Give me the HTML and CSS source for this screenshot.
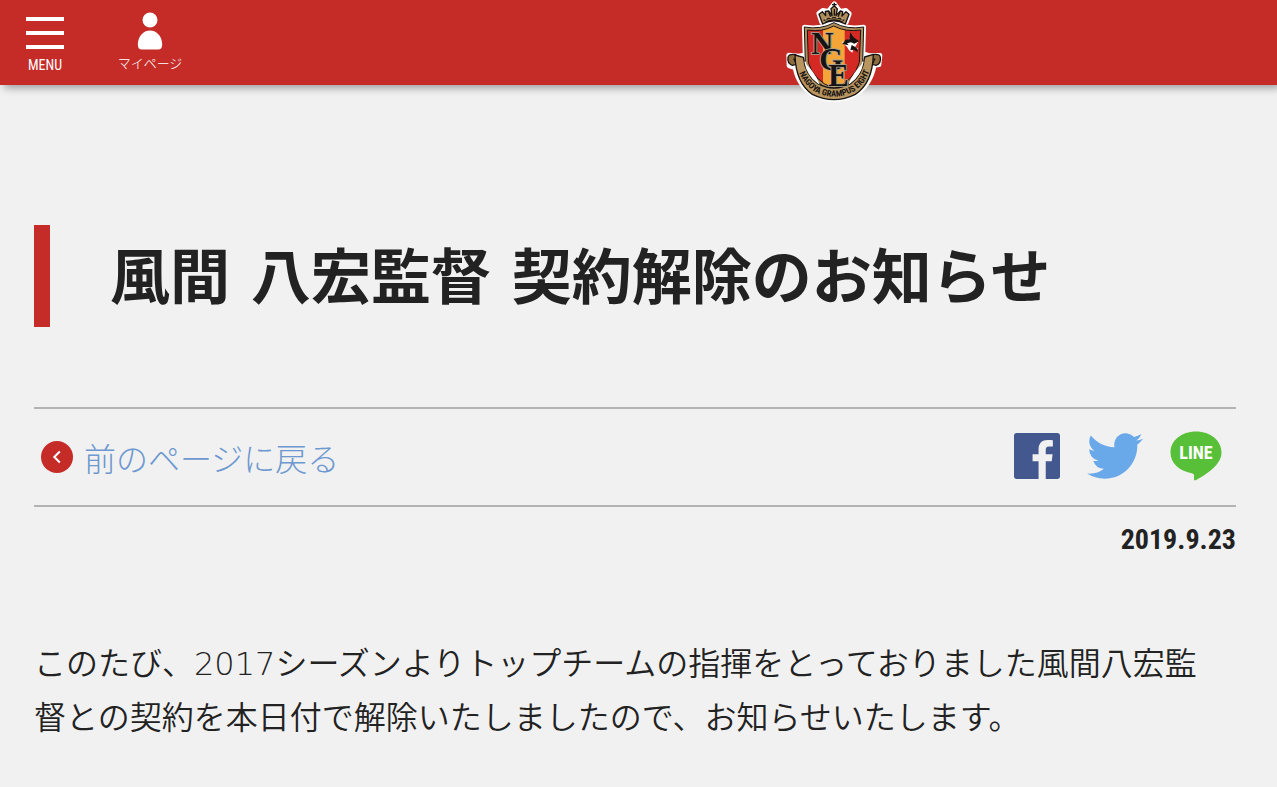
FILE: index.html
```html
<!DOCTYPE html>
<html lang="ja">
<head>
<meta charset="utf-8">
<meta name="viewport" content="width=device-width, initial-scale=1">
<title>風間 八宏監督 契約解除のお知らせ</title>
<link rel="stylesheet" href="styles.css">
</head>
<body>
<header class="site-header">
  <button class="header-item menu" type="button">
    <svg class="menu-icon" viewBox="0 0 38 38" aria-hidden="true"><path d="M0 5h38M0 19h38M0 33h38" stroke="#fff" stroke-width="4"/></svg>
    <span class="menu-label">MENU</span>
  </button>
  <a class="header-item mypage" href="#">
    <svg class="menu-icon" viewBox="0 0 38 38" aria-hidden="true"><g fill="#fff"><circle cx="19" cy="8" r="7.5"/><path d="M11 37.500Q6.500 37.500 6.800 32C7.500 23 13 18.500 19 18.500S30.500 23 31.200 32Q31.500 37.500 27 37.500Z"/></g></svg>
    <span class="mypage-label">マイページ</span>
  </a>
  <a class="crest" href="#" aria-label="NAGOYA GRAMPUS EIGHT">
    <svg class="crest-art" viewBox="0 0 360 330">
      <defs>
        <clipPath id="shield"><path d="M100 90Q144 97 179 78Q216 97 260 90L256 187Q242 241 180 266Q117 241 103 187Z"/></clipPath>
        <path id="ribbon-text" d="M66 186Q79 246 119 273Q180 307 242 273Q284 244 295 180"/>
      </defs>
      <g fill="#fff" stroke="#fff" stroke-width="14" stroke-linejoin="round">
        <path d="M143 67L134 40 146 31 163 34 181 11 198 34 216 31 226 41 217 67Z"/>
        <path d="M91 81Q140 90 180 68Q220 90 269 81L266 187Q248 250 180 276Q110 248 94 187Z"/>
        <path d="M44 165L75 168 90 165Q97 230 130 248Q180 275 231 248Q266 228 273 163L288 167 318 166 315 194 301 196Q288 258 244 283Q180 314 115 283Q73 256 63 203L45 197Z"/>
      </g>
      <path d="M91 81Q140 90 180 68Q220 90 269 81L266 187Q248 250 180 276Q110 248 94 187Z" fill="#b08e5b" stroke="#171312" stroke-width="3"/>
      <g clip-path="url(#shield)">
        <path d="M90 60H270V280H90Z" fill="#d42a23"/>
        <path d="M147 60H212V280H147Z" fill="#f4a537"/>
      </g>
      <path d="M100 90Q144 97 179 78Q216 97 260 90L256 187Q242 241 180 266Q117 241 103 187Z" fill="none" stroke="#171312" stroke-width="3"/>
      <path d="M146 72L135 43 145 35 155 47 154 34 164 33 174 47 171 26 181 17 190 27 186 47 199 33 206 35 204 48 216 35 225 43 214 72Q180 53 146 72Z" fill="#b08e5b" stroke="#171312" stroke-width="4" stroke-linejoin="round"/>
      <path d="M181 8V21M174 14H188M149 61Q180 45 211 61M154 67Q180 53 207 67M164 37L170 50M198 37L192 50M181 27V47" fill="none" stroke="#171312" stroke-width="4"/>
      <path d="M152 57H158M167 53H173M187 53H193M202 57H208" stroke="#f1d9a7" stroke-width="3"/>
      <path d="M65 164Q45 161 42 172Q39 190 55 196L68 193 60 178 72 176ZM297 164Q317 161 319 172Q322 190 306 196L294 193 302 178 290 176Z" fill="#8d6c3d" stroke="#171312" stroke-width="4"/>
      <path d="M63 165L88 172Q94 223 130 250Q180 278 231 250Q267 223 272 171L298 163Q296 250 244 283Q180 315 115 283Q65 249 63 165Z" fill="#b9965f" stroke="#171312" stroke-width="4" stroke-linejoin="round"/>
      <path d="M93 185Q101 228 133 249Q120 220 97 196ZM267 185Q259 228 227 249Q240 220 263 196Z" fill="#fff" stroke="#fff" stroke-width="4"/>
      <text class="ribbon"><textPath href="#ribbon-text" startOffset="50%" text-anchor="middle">NAGOYA GRAMPUS EIGHT</textPath></text>
      <g class="monogram">
        <text x="112" y="163">N</text>
        <text x="136" y="211">G</text>
        <text x="163" y="259">E</text>
      </g>
      <path d="M203 126L220 123 235 105 236 119 252 126 244 140 253 147 238 146 235 158 225 151 219 140Z" fill="#fff"/>
      <path d="M205 132L215 119 226 118 229 97 239 112 255 124 241 131 231 127 219 130 224 136ZM233 135L248 143 252 157 239 149 229 151Z" fill="#171312"/>
    </svg>
  </a>
</header>
<main class="article">
  <h1 class="title">風間 八宏監督 契約解除のお知らせ</h1>
  <div class="toolbar">
    <a class="back" href="#">
      <svg class="back-icon" viewBox="0 0 32 32" aria-hidden="true"><circle cx="16" cy="16" r="16" fill="#c52c28"/><path d="M18.800 10.500L13.300 16L18.800 21.500" fill="none" stroke="#fff" stroke-width="2"/></svg>
      <span>前のページに戻る</span>
    </a>
    <nav class="share" aria-label="シェア">
      <a href="#" aria-label="Facebook"><svg class="facebook" viewBox="0 0 24 24"><path fill="#43588f" d="M22.676 0H1.324C.593 0 0 .593 0 1.324v21.352C0 23.408.593 24 1.324 24h11.494v-9.294H9.689v-3.621h3.129V8.410c0-3.099 1.894-4.785 4.659-4.785 1.325 0 2.464.097 2.796.141v3.240h-1.921c-1.500 0-1.792.721-1.792 1.771v2.311h3.584l-.465 3.630H16.560V24h6.115c.733 0 1.325-.592 1.325-1.324V1.324C24 .593 23.408 0 22.676 0"/></svg></a>
      <a href="#" aria-label="Twitter"><svg class="twitter" viewBox="0 2.200 24 19.600"><path fill="#6aa9e9" d="M23.954 4.569a10 10 0 0 1-2.825.775 4.958 4.958 0 0 0 2.163-2.723c-.951.555-2.005.959-3.127 1.184a4.920 4.920 0 0 0-8.384 4.482C7.691 8.094 4.066 6.130 1.640 3.161a4.822 4.822 0 0 0-.666 2.475c0 1.710.870 3.213 2.188 4.096a4.904 4.904 0 0 1-2.228-.616v.061a4.923 4.923 0 0 0 3.946 4.827 4.996 4.996 0 0 1-2.212.085 4.937 4.937 0 0 0 4.604 3.417 9.868 9.868 0 0 1-6.102 2.105c-.390 0-.779-.023-1.170-.067a13.995 13.995 0 0 0 7.557 2.209c9.054 0 13.999-7.496 13.999-13.986 0-.209 0-.420-.015-.630a9.936 9.936 0 0 0 2.460-2.548z"/></svg></a>
      <a href="#" aria-label="LINE"><svg class="line" viewBox="0 0 52 50"><path fill="#58bf38" d="M26 0.500C11.500 0.500 0.500 9.500 0.500 21.500C0.500 32 9 39.500 20.500 42C24 42.700 24.500 43.500 24 47C23.700 49.500 24.500 50 27 48.500C36 43.500 51.500 34 51.500 21.500C51.500 9.500 40.500 0.500 26 0.500Z"/><text class="line-text" x="26" y="28" text-anchor="middle">LINE</text></svg></a>
    </nav>
  </div>
  <time class="date" datetime="2019-09-23">2019.9.23</time>
  <p class="body-text">このたび、2017シーズンよりトップチームの指揮をとっておりました風間八宏監督との契約を本日付で解除いたしましたので、お知らせいたします。</p>
</main>
</body>
</html>
```

FILE: styles.css
```css
* { box-sizing: border-box; }
body {
  margin: 0;
  background: #f1f1f1;
  color: #222;
  font-family: "Noto Sans CJK JP", sans-serif;
}
a { color: inherit; text-decoration: none; }
svg { display: block; }
.site-header {
  position: relative;
  display: flex;
  align-items: flex-start;
  gap: 44px;
  height: 85px;
  padding: 12px 18px 0;
  background: #c52c28;
  box-shadow: 4px 3px 8px rgba(0, 0, 0, .35);
}
.header-item {
  display: flex;
  flex-direction: column;
  align-items: center;
  padding: 0;
  border: 0;
  background: none;
  color: #fff;
}
.menu { width: 54px; padding-top: 2px; }
.mypage { width: 68px; }
.menu-icon { width: 38px; height: 38px; flex: none; }
.menu-label {
  font: 14px/26px "Roboto Condensed", "Liberation Sans Narrow", sans-serif;
}
.mypage-label {
  font-size: 13px;
  font-weight: 300;
  line-height: 26px;
  white-space: nowrap;
}
.crest {
  position: absolute;
  top: 0;
  left: 65.3%;
  transform: translateX(-50%);
}
.crest-art { width: 120px; height: 110px; }
.ribbon { font: bold 26px "Roboto Condensed", "Liberation Sans Narrow", sans-serif; fill: #171312; }
.monogram {
  font: bold 92px "Liberation Serif", serif;
  fill: #171312;
  stroke: #a9a294;
  stroke-width: 5px;
  paint-order: stroke;
}
.article { padding: 140px 41px 48px 34px; }
.title {
  margin: 0 0 80px;
  padding: 4px 0 0 60px;
  border-left: 16px solid #c52c28;
  font: bold 60px/98px "DejaVu Sans", "Noto Sans CJK JP", sans-serif;
}
.toolbar {
  display: flex;
  align-items: center;
  justify-content: space-between;
  height: 100px;
  border-top: 2px solid #b3b3b3;
  border-bottom: 2px solid #b3b3b3;
}
.back {
  display: flex;
  align-items: center;
  gap: 11px;
  padding-left: 7px;
  color: #6d98d0;
  font-size: 32px;
  font-weight: 300;
  line-height: 48px;
}
.back-icon { width: 32px; height: 32px; }
.share {
  display: flex;
  align-items: center;
  gap: 27px;
  padding: 0 14px 2px 0;
}
.facebook { width: 46px; height: 46px; }
.twitter { width: 56px; height: 46px; }
.line { width: 52px; height: 50px; }
.line-text { font: bold 18px "Roboto Condensed", "Liberation Sans", sans-serif; fill: #fff; }
.date {
  display: block;
  margin-top: 13px;
  text-align: right;
  font: bold 28px/40px "Roboto Condensed", "Liberation Sans Narrow", sans-serif;
}
.body-text {
  margin: 77px 0 0;
  padding-right: 20px;
  font: 350 32px/54px "DejaVu Sans", "Noto Sans CJK JP", sans-serif;
}
```
